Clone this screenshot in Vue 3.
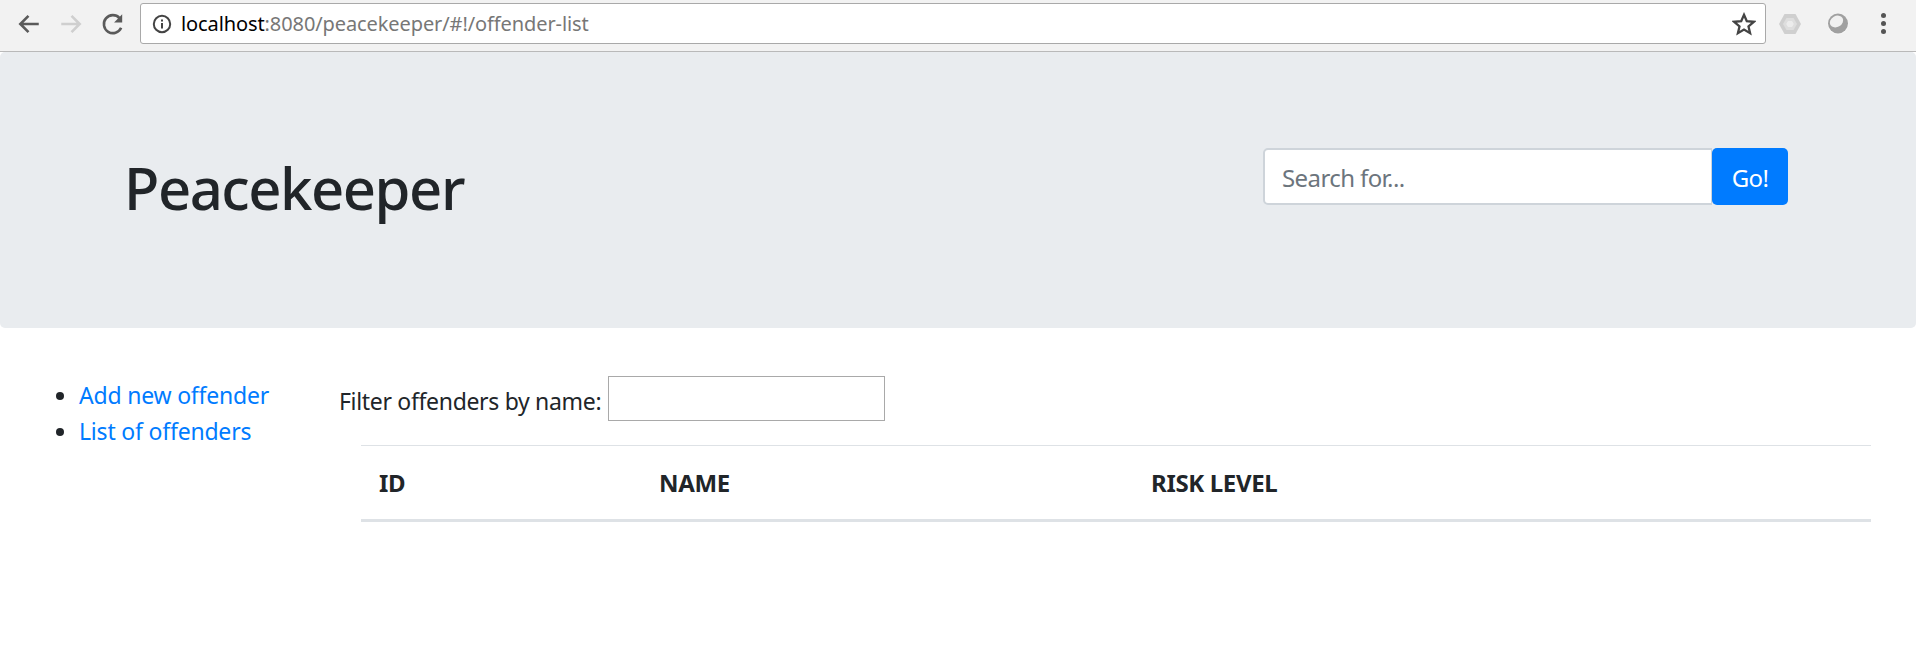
<script setup>
const columns = [
  { label: 'ID', width: '280px' },
  { label: 'NAME', width: '492px' },
  { label: 'RISK LEVEL', width: 'auto' }
]
</script>

<template>
  <div class="page">
    <div class="toolbar">
      <div class="nav-icons">
        <svg class="icon" viewBox="0 0 24 24"><path d="M21 12H4M11.500 4.500 4 12l7.500 7.500" fill="none" stroke="#5a5a5a" stroke-width="2.400" /></svg>
        <svg class="icon" viewBox="0 0 24 24"><path d="M3 12h17M12.500 4.500 20 12l-7.500 7.500" fill="none" stroke="#cfcfcf" stroke-width="2.400" /></svg>
        <svg class="icon" viewBox="0 0 24 24"><path d="M19.500 15.500A8.300 8.300 0 1 1 18 6.500" fill="none" stroke="#5a5a5a" stroke-width="2.400" /><path d="M20.500 3v7.500H13z" fill="#5a5a5a" /></svg>
      </div>
      <div class="url-bar">
        <svg class="info" viewBox="0 0 20 20">
          <circle cx="10" cy="10" r="8.200" fill="none" stroke="#444" stroke-width="2" />
          <path d="M10 9v5.500M10 5.500v2" stroke="#444" stroke-width="2" />
        </svg>
        <span class="url"><b>localhost</b>:8080/peacekeeper/#!/offender-list</span>
        <svg class="star" viewBox="0 0 24 24"><path d="m12 2.800 2.800 6.400 7 .6-5.300 4.600 1.600 6.800-6.100-3.600-6.100 3.600 1.600-6.800L2.200 9.800l7-.6z" fill="none" stroke="#444" stroke-width="2.300" /></svg>
      </div>
      <div class="ext-icons">
        <svg class="ext" viewBox="0 0 24 24"><path d="M6.500 2h11L23 12l-5.500 10h-11L1 12z" fill="#cfcfcf" /><path d="M8.500 6h7L19 12l-3.500 6h-7L5 12z" fill="#dedede" /><path d="M10 9h4l1.800 3-1.800 3h-4l-1.800-3z" fill="#ececec" /></svg>
        <svg class="ext" viewBox="0 0 24 24"><circle cx="12" cy="12" r="10.500" fill="#f7f7f7" /><circle cx="12" cy="11.500" r="10" fill="#a0a0a0" /><ellipse cx="10.500" cy="9.500" rx="7" ry="5.500" transform="rotate(-30 10.500 9.500)" fill="#f0f0f0" /></svg>
        <div class="dots"><i></i><i></i><i></i></div>
      </div>
    </div>

    <header class="jumbotron">
      <h1>Peacekeeper</h1>
      <div class="search">
        <input type="text" placeholder="Search for..." />
        <button type="button">Go!</button>
      </div>
    </header>

    <div class="content">
      <ul class="side-nav">
        <li><a href="#">Add new offender</a></li>
        <li><a href="#">List of offenders</a></li>
      </ul>
      <main class="main">
        <div class="filter">
          <label for="filter-name">Filter offenders by name:</label>
          <input id="filter-name" type="text" />
        </div>
        <table>
          <thead>
            <tr>
              <th v-for="col in columns" :key="col.label" :style="{ width: col.width }">{{ col.label }}</th>
            </tr>
          </thead>
        </table>
      </main>
    </div>
  </div>
</template>

<style>
html,
body {
  margin: 0;
  background: #fff;
}
</style>

<style scoped>
.page {
  height: 651px;
  overflow: hidden;
  font-family: "Noto Sans", "Open Sans", sans-serif;
  color: #212529;
}

.toolbar {
  display: flex;
  align-items: center;
  height: 43px;
  padding: 2px 0 6px;
  background: #f2f2f2;
  border-bottom: 1px solid #b9b9b9;
}

.nav-icons {
  display: flex;
  gap: 16px;
  width: 140px;
  padding-left: 16px;
  box-sizing: border-box;
}

.icon {
  width: 26px;
  height: 26px;
}

.url-bar {
  display: flex;
  align-items: center;
  width: 1626px;
  height: 41px;
  box-sizing: border-box;
  padding: 0 9px 0 11px;
  background: #fff;
  border: 1px solid #a9a9a9;
  border-radius: 3px;
}

.info {
  width: 20px;
  height: 20px;
  margin-right: 9px;
}

.url {
  flex: 1;
  font-size: 20px;
  color: #777;
  letter-spacing: -0.1px;
}

.url b {
  font-weight: 400;
  color: #000;
}

.star {
  width: 24px;
  height: 24px;
}

.ext-icons {
  display: flex;
  align-items: center;
  flex: 1;
  padding-left: 12px;
}

.ext {
  width: 24px;
  height: 24px;
  margin-right: 24px;
}

.dots {
  display: grid;
  gap: 3px;
  margin-left: 7px;
}

.dots i {
  display: block;
  width: 5px;
  height: 5px;
  border-radius: 50%;
  background: #555;
}

.jumbotron {
  display: flex;
  align-items: center;
  justify-content: space-between;
  height: 276px;
  padding: 0 128px 0 124px;
  background: #e9ecef;
  border-radius: 5px;
}

h1 {
  margin: 0 0 5px;
  font-size: 58px;
  font-weight: 500;
  line-height: 1.2;
  letter-spacing: -1.5px;
}

.search {
  display: flex;
  margin-bottom: 27px;
}

.search input {
  width: 449px;
  height: 57px;
  box-sizing: border-box;
  padding: 2px 17px 0;
  border: 2px solid #ced4da;
  border-right-width: 1px;
  border-radius: 5px 0 0 5px;
  background: #fff;
  font: 24px "Noto Sans", sans-serif;
  letter-spacing: -0.6px;
  outline: none;
}

.search input::placeholder {
  color: #6c757d;
}

.search button {
  width: 76px;
  height: 57px;
  padding: 2px 0 0;
  border: 0;
  border-radius: 5px;
  background: #007bff;
  color: #fff;
  font: 24px "Noto Sans", sans-serif;
  letter-spacing: -0.6px;
}

.content {
  display: flex;
  font-size: 23px;
  line-height: 36px;
  letter-spacing: -0.2px;
}

.side-nav {
  width: 339px;
  box-sizing: border-box;
  margin: 0;
  padding: 49px 0 0 79px;
}

.side-nav a {
  color: #007bff;
  text-decoration: none;
}

.main {
  flex: 1;
  padding: 48px 45px 0 0;
}

.filter {
  display: flex;
  align-items: center;
  gap: 7px;
  height: 45px;
  margin-bottom: 24px;
}

.filter label {
  padding-top: 4px;
  letter-spacing: -0.32px;
}

.filter input {
  width: 277px;
  height: 45px;
  box-sizing: border-box;
  border: 1px solid #a9a9a9;
  outline: none;
}

table {
  width: calc(100% - 22px);
  margin-left: 22px;
  border-collapse: collapse;
  table-layout: fixed;
}

th {
  height: 75px;
  padding: 1px 18px 0;
  box-sizing: border-box;
  text-align: left;
  font-size: 24px;
  font-weight: 700;
  letter-spacing: -0.35px;
  border-top: 1px solid #dee2e6;
  border-bottom: 3px solid #dee2e6;
}
</style>
